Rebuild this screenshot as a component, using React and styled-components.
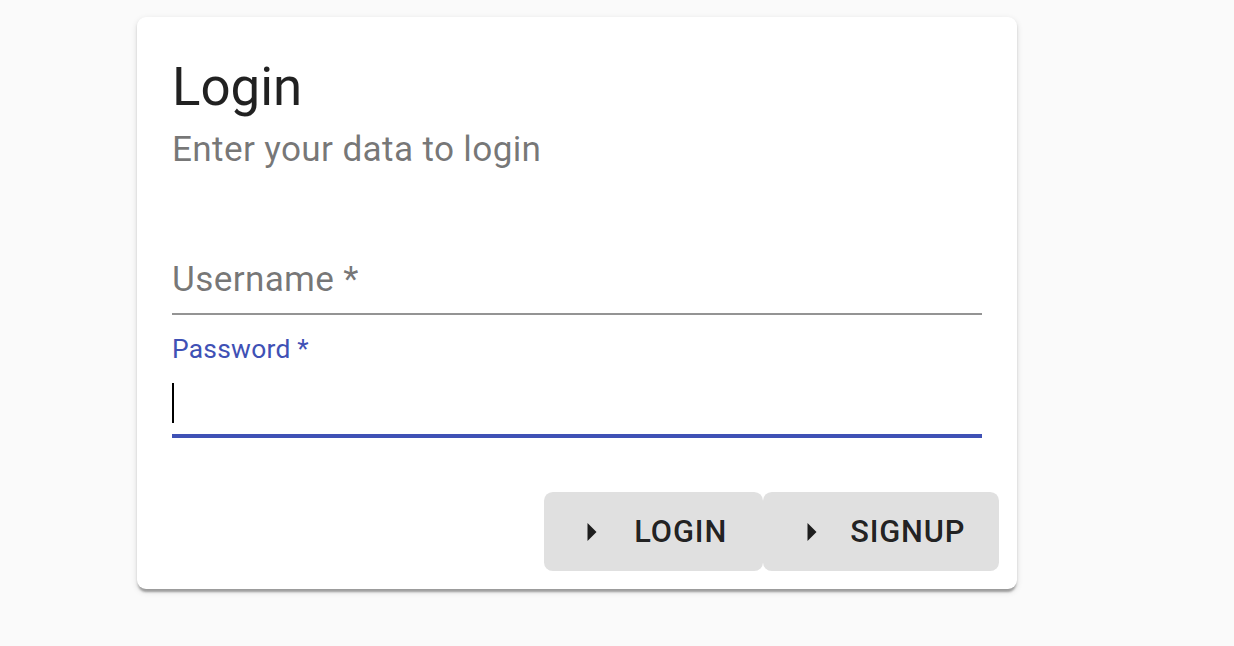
import React from "react";
import styled, { createGlobalStyle } from "styled-components";

const Global = createGlobalStyle`
  html, body { margin: 0; padding: 0; background: #fafafa; }
  body { font-family: Roboto, "Noto Sans", "Liberation Sans", sans-serif; }
`;

const Page = styled.div`
  padding: 17px 0 0 137px;
  min-height: 629px;
`;

const Card = styled.div`
  width: 880px;
  height: 572px;
  box-sizing: border-box;
  background: #fff;
  border-radius: 9px;
  box-shadow: 0 4.4px 2.2px -2.2px rgba(0,0,0,0.2), 0 2.2px 2.2px 0 rgba(0,0,0,0.14), 0 2.2px 6.6px 0 rgba(0,0,0,0.12);
  display: flex;
  flex-direction: column;
`;

const Header = styled.div`
  padding: 35px 35px 35px;
`;

const Title = styled.h1`
  margin: 0;
  font-size: 52.8px;
  font-weight: 400;
  line-height: 70.7px;
  color: rgba(0,0,0,0.87);
`;

const Subtitle = styled.div`
  font-size: 35.2px;
  line-height: 52.8px;
  letter-spacing: 0.33px;
  color: rgba(0,0,0,0.54);
`;

const Content = styled.div`
  padding: 0 35px;
  display: flex;
  flex-direction: column;
  gap: 17.6px;
  margin-top: -1px;
`;

const Field = styled.div`
  display: flex;
  flex-direction: column;
`;

const LabelRow = styled.div`
  height: 35.2px;
  display: flex;
  align-items: flex-start;
`;

const SmallLabel = styled.label`
  font-size: 26.4px;
  line-height: 31px;
  letter-spacing: 0.25px;
  margin-top: 1px;
  color: ${p => (p.$focused ? "#3f51b5" : "rgba(0,0,0,0.54)")};
`;

const InputBox = styled.div`
  height: 70.4px;
  box-sizing: border-box;
  padding: 8.8px 0 11px;
  display: flex;
  align-items: center;
  border-bottom: ${p => (p.$focused ? "4.4px solid #3f51b5" : "2.2px solid rgba(0,0,0,0.42)")};
`;

const Placeholder = styled.span`
  font-size: 35.2px;
  line-height: 50.6px;
  letter-spacing: 0.33px;
  color: rgba(0,0,0,0.54);
  margin-top: 4px;
`;

const Caret = styled.span`
  display: block;
  width: 2px;
  height: 40px;
  background: #000;
  margin-top: 6px;
`;

const Actions = styled.div`
  margin-top: auto;
  padding: 17.6px;
  display: flex;
  justify-content: flex-end;
`;

const Button = styled.button`
  height: 79px;
  border: none;
  border-radius: 8.8px;
  background: #e0e0e0;
  color: rgba(0,0,0,0.87);
  font-family: Roboto, "Noto Sans", "Liberation Sans", sans-serif;
  font-size: 30.8px;
  font-weight: 500;
  letter-spacing: 0.88px;
  text-transform: uppercase;
  display: flex;
  align-items: center;
  gap: ${p => p.$gap}px;
  padding: 0 ${p => p.$pr}px 0 ${p => p.$pl}px;
  cursor: pointer;
`;

const Arrow = () => (
  <svg width="10" height="18" viewBox="0 0 5 10" aria-hidden="true">
    <path d="M0 0l5 5-5 5z" fill="rgba(0,0,0,0.87)" />
  </svg>
);

export default function App() {
  return (
    <>
      <Global />
      <Page>
        <Card>
          <Header>
            <Title>Login</Title>
            <Subtitle>Enter your data to login</Subtitle>
          </Header>
          <Content>
            <Field>
              <LabelRow />
              <InputBox>
                <Placeholder>Username *</Placeholder>
              </InputBox>
            </Field>
            <Field>
              <LabelRow>
                <SmallLabel $focused>Password *</SmallLabel>
              </LabelRow>
              <InputBox $focused>
                <Caret />
              </InputBox>
            </Field>
          </Content>
          <Actions>
            <Button $pl={43} $gap={37} $pr={36}>
              <Arrow />
              Login
            </Button>
            <Button $pl={44} $gap={33} $pr={34}>
              <Arrow />
              Signup
            </Button>
          </Actions>
        </Card>
      </Page>
    </>
  );
}
